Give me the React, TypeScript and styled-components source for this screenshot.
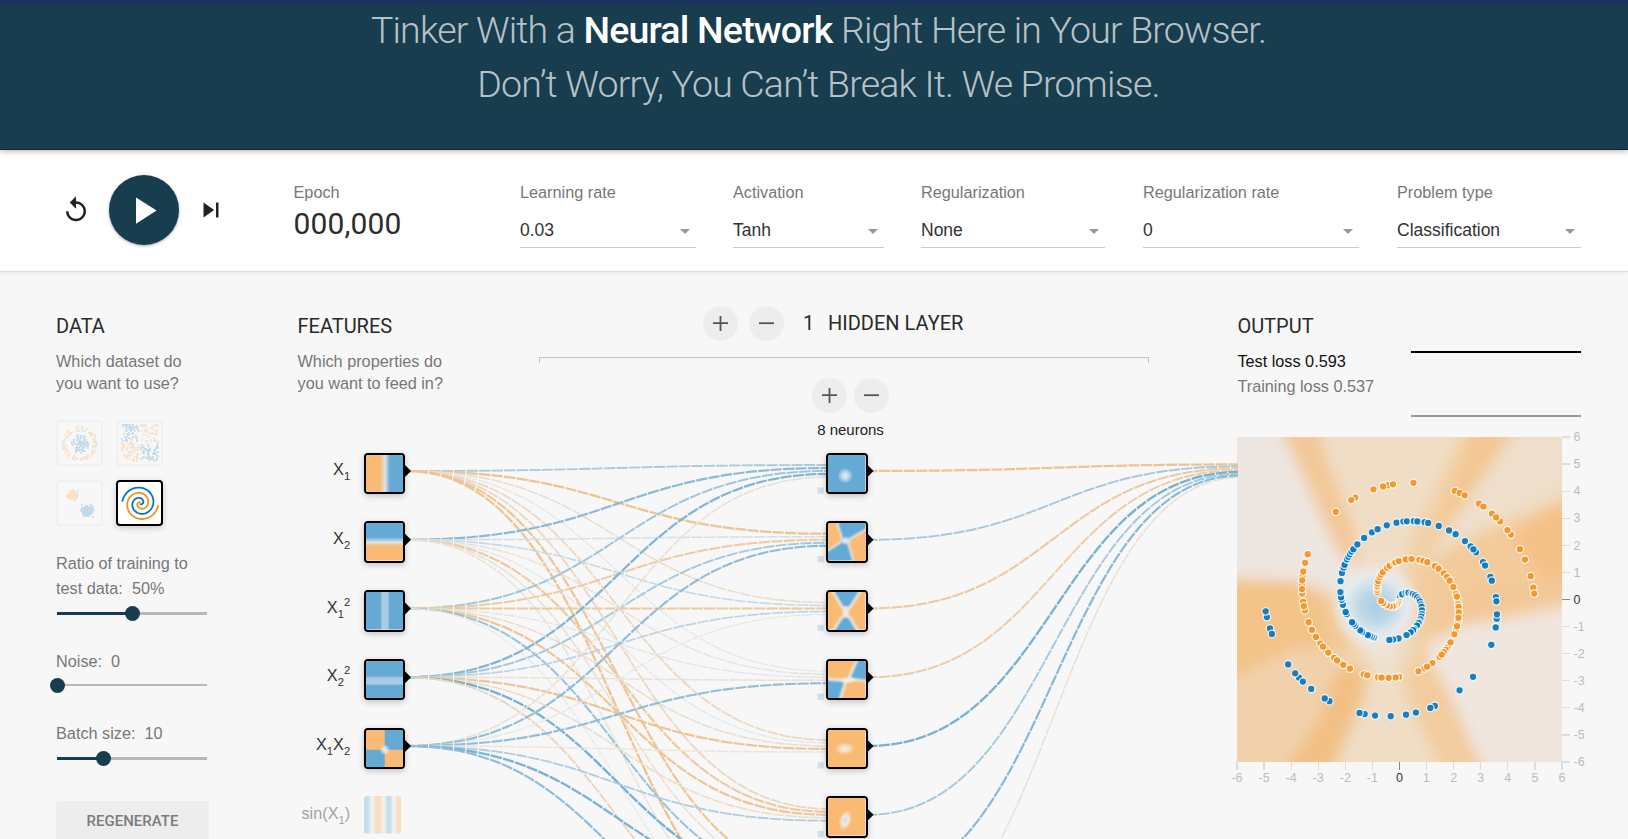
import React from "react";
import styled, { createGlobalStyle } from "styled-components";

const GlobalStyle = createGlobalStyle`
  * { box-sizing: border-box; }
  html, body { margin: 0; padding: 0; }
  body {
    height: 839px;
    overflow: hidden;
    background: #f7f7f7;
    font-family: "Liberation Sans", Arial, sans-serif;
    color: #222;
  }
`;

const ORANGE = "#f59322";
const BLUE = "#0877bd";
const SOFT_ORANGE = "#f9bb74";
const SOFT_BLUE = "#64aad5";
const PALE = "#f0f2f3";
const NAVY = "#183d4e";

/* ---------- page shell ---------- */

const Page = styled.div`
  width: 1628px;
  height: 839px;
  overflow: hidden;
  display: flex;
  flex-direction: column;
`;

const Header = styled.header`
  flex: none;
  height: 150px;
  background: ${NAVY};
  border-top: 6px solid #1a355c;
  border-bottom: 1px solid #10242e;
  padding-left: 9px;
  z-index: 2;
  box-shadow: 0 1px 6px rgba(60, 20, 20, 0.35);
`;

const Title = styled.h1`
  margin: -3px 0 0;
  font: 300 37.5px/54px Roboto, sans-serif;
  letter-spacing: -0.8px;
  text-align: center;
  color: rgba(255, 255, 255, 0.7);
  white-space: nowrap;

  b {
    font-weight: 500;
    color: #fff;
  }
`;

const Controls = styled.section`
  flex: none;
  display: flex;
  height: 122px;
  background: #fff;
  border-bottom: 1px solid #dcdcdc;
  box-shadow: 0 1px 3px rgba(0, 0, 0, 0.06);
  padding-left: 61px;
`;

const Timeline = styled.div`
  display: flex;
  align-items: center;
  width: 232.5px;
  height: 120px;

  svg {
    display: block;
    fill: #222;
  }
`;

const PlayButton = styled.div`
  display: flex;
  align-items: center;
  justify-content: center;
  width: 70px;
  height: 70px;
  margin: 0 16.5px 0 18px;
  border-radius: 50%;
  background: ${NAVY};
  box-shadow: 0 1px 3px rgba(0, 0, 0, 0.35);

  svg {
    margin-right: 1px;
    fill: #fff;
  }
`;

const Epoch = styled.div`
  width: 226.5px;
  padding-top: 31.5px;
`;

const ControlLabel = styled.div`
  font-size: 16.25px;
  line-height: 20px;
  color: #777;
  white-space: nowrap;
`;

const EpochValue = styled.div`
  margin-top: 4.5px;
  font: 400 30px/36px Roboto, sans-serif;
  letter-spacing: 0.15px;
  color: #2c2c2c;
`;

const Field = styled.div<{ $width: number; $gap: number }>`
  width: ${(p) => p.$width}px;
  margin-right: ${(p) => p.$gap}px;
  padding-top: 31.5px;
`;

const Select = styled.div`
  display: flex;
  align-items: center;
  justify-content: space-between;
  height: 35px;
  margin-top: 11.5px;
  padding-right: 6px;
  border-bottom: 1px solid #ccc;
  font-size: 17.5px;
  color: #333;

  &::after {
    content: "";
    border: 5px solid transparent;
    border-top-color: #999;
    border-bottom: 0;
    margin-top: 2px;
  }
`;

const Main = styled.main`
  display: flex;
  flex: 1;
  padding: 44px 0 0 56px;
`;

const Heading = styled.h4`
  margin: 0;
  font: 400 20px/20px Roboto, sans-serif;
  color: #2a2a2a;
  white-space: nowrap;
`;

const Hint = styled.p`
  margin: 14px 0 0;
  font-size: 16.25px;
  line-height: 22px;
  color: #777;
  white-space: nowrap;
`;

/* ---------- data column ---------- */

const DataColumn = styled.section`
  width: 241.5px;
`;

const Datasets = styled.div`
  display: grid;
  grid-template-columns: 47px 47px;
  gap: 14px 13px;
  margin-top: 26px;
`;

const Thumb = styled.div<{ $selected?: boolean }>`
  width: 47px;
  height: 46px;
  border: 2px solid ${(p) => (p.$selected ? "#000" : "#f0f0f0")};
  border-radius: 4px;
  background: ${(p) => (p.$selected ? "#fff" : "transparent")};
  box-shadow: ${(p) => (p.$selected ? "0 2px 6px rgba(0,0,0,.2)" : "none")};

  svg {
    display: block;
    opacity: ${(p) => (p.$selected ? 1 : 0.22)};
  }
`;

const SliderBlock = styled.div<{ $top: number }>`
  width: 153px;
  margin-top: ${(p) => p.$top}px;
  font-size: 16.25px;
  line-height: 25px;
  color: #777;
  white-space: pre;
`;

const Track = styled.div<{ $value: number; $thin?: boolean; $gap: number }>`
  display: flex;
  align-items: center;
  width: 150px;
  height: 15px;
  margin: ${(p) => p.$gap}px 0 0 1px;
  background: linear-gradient(
      to right,
      ${NAVY} ${(p) => p.$value}%,
      #b8b8b8 ${(p) => p.$value}%
    )
    center / 100% ${(p) => (p.$thin ? 2 : 3)}px no-repeat;

  &::before {
    content: "";
    width: 15px;
    height: 15px;
    margin-left: calc(${(p) => p.$value}% - 7.5px);
    border-radius: 50%;
    background: ${NAVY};
  }
`;

const Regenerate = styled.div`
  width: 153px;
  height: 42px;
  margin-top: 35px;
  border-radius: 3px;
  background: #ededed;
  font: 500 15px/41px Roboto, sans-serif;
  color: #7c7c7c;
  text-align: center;
`;

/* ---------- network ---------- */

const Network = styled.section`
  width: 939.5px;
`;

const NetworkHead = styled.div`
  display: flex;
  height: 122px;
`;

const FeaturesHead = styled.div`
  width: 241.5px;
`;

const LayersHead = styled.div`
  width: 610px;
  margin-top: -10.5px;
`;

const LayerRow = styled.div`
  display: flex;
  align-items: center;
  height: 35px;
  padding-left: 164px;
`;

const RoundButton = styled.div<{ $gap?: number }>`
  display: flex;
  align-items: center;
  justify-content: center;
  flex: none;
  width: 35px;
  height: 35px;
  margin-right: ${(p) => p.$gap ?? 0}px;
  border-radius: 50%;
  background: #ededed;

  svg {
    display: block;
  }
`;

const LayerTitle = styled(Heading)`
  margin-top: -1px;
`;

const LayerCount = styled(LayerTitle)`
  width: 25px;
`;

const Bracket = styled.div`
  height: 6px;
  margin-top: 16.5px;
  border: 1px solid #c4c4c4;
  border-bottom: 0;
`;

const Diagram = styled.div`
  position: relative;
  height: 400px;
`;

const Links = styled.svg`
  position: absolute;
  left: 0;
  top: 0;
`;

const NodeBox = styled.div<{ $x: number; $y: number; $off?: boolean }>`
  position: absolute;
  left: ${(p) => p.$x}px;
  top: ${(p) => p.$y}px;
  width: ${(p) => (p.$off ? 37.5 : 41.5)}px;
  height: ${(p) => (p.$off ? 37.5 : 41.5)}px;
  border: ${(p) => (p.$off ? "0" : "2px solid #000")};
  border-radius: ${(p) => (p.$off ? 3 : 4)}px;
  overflow: hidden;
  opacity: ${(p) => (p.$off ? 0.4 : 1)};
  box-shadow: ${(p) => (p.$off ? "none" : "0 2px 6px rgba(0,0,0,.22)")};

  svg {
    display: block;
  }
`;

const NodeLabel = styled.div<{ $y: number; $off?: boolean }>`
  position: absolute;
  right: 886.8px;
  top: ${(p) => p.$y}px;
  font-size: 16.25px;
  line-height: 20px;
  color: ${(p) => (p.$off ? "#a3a3a3" : "#333")};
  white-space: nowrap;

  sub,
  sup {
    position: relative;
    font-size: 11.25px;
    line-height: 0;
    vertical-align: baseline;
  }
  sub {
    top: 5px;
  }
  sup {
    top: -7px;
  }
`;

const NeuronControls = styled.div`
  position: absolute;
  left: 514.5px;
  top: -60.5px;
  width: 77px;
  display: flex;
  flex-wrap: wrap;
  justify-content: space-between;
`;

const NeuronCount = styled.div`
  width: 100%;
  margin-top: 8.5px;
  font-size: 15px;
  line-height: 18px;
  text-align: center;
  color: #222;
`;

/* ---------- output ---------- */

const OutputColumn = styled.section`
  width: 391px;
`;

const OutputTop = styled.div`
  display: flex;
  height: 111px;
`;

const Losses = styled.div`
  width: 173px;
  padding-left: 0.4px;
`;

const Loss = styled.div<{ $dark?: boolean; $top: number }>`
  margin-top: ${(p) => p.$top}px;
  font-size: 16.25px;
  line-height: 20px;
  color: ${(p) => (p.$dark ? "#111" : "#777")};
  white-space: nowrap;
`;

const Chart = styled.svg`
  display: block;
  margin-left: -6px;
`;

/* ---------- icons ---------- */

const Icon = ({ size, d }: { size: number; d: string }) => (
  <svg width={size} height={size} viewBox="0 0 24 24">
    <path d={d} />
  </svg>
);

const REPLAY =
  "M12 5V1L7 6l5 5V7c3.31 0 6 2.69 6 6s-2.69 6-6 6-6-2.69-6-6H4c0 4.42 3.58 8 8 8s8-3.58 8-8-3.58-8-8-8z";
const PLAY = "M8 5v14l11-7z";
const SKIP = "M6 18l8.5-6L6 6v12zM16 6v12h2V6h-2z";

const Plus = () => (
  <svg width="15" height="15" viewBox="0 0 15 15">
    <path d="M0 7.2h15M7.5 0v15" stroke="#555" strokeWidth="1.8" />
  </svg>
);
const Minus = () => (
  <svg width="15" height="15" viewBox="0 0 15 15">
    <path d="M0 7.2h15" stroke="#555" strokeWidth="1.8" />
  </svg>
);

/* ---------- dataset thumbnails ---------- */

function random(seed: number) {
  let s = seed;
  return () => {
    s = (s * 16807) % 2147483647;
    return s / 2147483647;
  };
}

type Dot = [number, number, string];

function circleDots(): Dot[] {
  const rnd = random(41);
  const dots: Dot[] = [];
  for (let i = 0; i < 100; i++) {
    const a = rnd() * Math.PI * 2;
    const r = rnd() * 9;
    dots.push([22 + r * Math.cos(a), 22 + r * Math.sin(a), BLUE]);
    const b = rnd() * Math.PI * 2;
    const q = 13 + rnd() * 4.5;
    dots.push([22 + q * Math.cos(b), 22 + q * Math.sin(b), ORANGE]);
  }
  return dots;
}

function xorDots(): Dot[] {
  const rnd = random(977);
  const dots: Dot[] = [];
  for (let i = 0; i < 230; i++) {
    const x = rnd() * 2 - 1;
    const y = rnd() * 2 - 1;
    const px = 22 + x * 17.5 + Math.sign(x);
    const py = 21 + y * 17.5 + Math.sign(y);
    dots.push([px, py, x * y > 0 ? BLUE : ORANGE]);
  }
  return dots;
}

function gaussDots(): Dot[] {
  const rnd = random(313);
  const g = () => rnd() + rnd() + rnd() - 1.5;
  const dots: Dot[] = [];
  for (let i = 0; i < 150; i++) {
    dots.push([14.5 + g() * 4.6, 13.5 + g() * 4.6, ORANGE]);
    dots.push([29.5 + g() * 5.6, 28.5 + g() * 5, BLUE]);
  }
  return dots;
}

const DotsThumb = ({ dots }: { dots: Dot[] }) => (
  <svg width="43" height="42">
    {dots.map(([x, y, c], i) => (
      <rect key={i} x={Math.round(x) - 1} y={Math.round(y) - 1} width="1.7" height="1.7" fill={c} />
    ))}
  </svg>
);

function spiral(i: number, sign: number): [number, number] {
  const r = i / 50;
  const t = (1.75 * i * 2 * Math.PI) / 250;
  return [sign * r * Math.sin(t), -sign * r * Math.cos(t)];
}

// The thumbnail's y axis points down, so the spiral is mirrored there.
function spiralPath(sign: number, scale: number) {
  const pts: string[] = [];
  for (let i = 2; i < 250; i += 3) {
    const [x, y] = spiral(i, sign);
    pts.push(`${(22.3 + x * scale).toFixed(2)} ${(21.3 - y * scale).toFixed(2)}`);
  }
  return "M" + pts.join("L");
}

const SpiralThumb = () => (
  <svg width="43" height="42" fill="none" strokeWidth="1.8">
    <path d={spiralPath(1, 3.65)} stroke={BLUE} />
    <path d={spiralPath(-1, 3.65)} stroke={ORANGE} />
  </svg>
);

/* ---------- node heat maps ---------- */

const NodeArt = ({ base, children }: { base: string; children?: React.ReactNode }) => (
  <svg width="37.5" height="37.5" viewBox="0 0 38 38">
    <rect width="38" height="38" fill={base} />
    {children}
  </svg>
);

const FEATURES: { label: React.ReactNode; art: React.ReactNode; off?: boolean }[] = [
  {
    label: <>X<sub>1</sub></>,
    art: <NodeArt base="url(#fx)" />,
  },
  {
    label: <>X<sub>2</sub></>,
    art: <NodeArt base="url(#fy)" />,
  },
  {
    label: <>X<sub>1</sub><sup>2</sup></>,
    art: <NodeArt base="url(#fxx)" />,
  },
  {
    label: <>X<sub>2</sub><sup>2</sup></>,
    art: <NodeArt base="url(#fyy)" />,
  },
  {
    label: <>X<sub>1</sub>X<sub>2</sub></>,
    art: (
      <NodeArt base={SOFT_BLUE}>
        <g filter="url(#soft1)">
          <path d="M-5 -5H19V20H-5zM19 20H43V43H19z" fill={SOFT_ORANGE} />
        </g>
        <circle cx="19" cy="20" r="5.5" fill="url(#glow)" />
      </NodeArt>
    ),
  },
  {
    label: <>sin(X<sub>1</sub>)</>,
    art: <NodeArt base="url(#fsin)" />,
    off: true,
  },
];

const NEURONS: React.ReactNode[] = [
  <NodeArt base={SOFT_BLUE}>
    <circle cx="17.5" cy="21" r="8" fill="url(#glow)" />
  </NodeArt>,
  <NodeArt base={SOFT_BLUE}>
    <g filter="url(#soft)" fill={SOFT_ORANGE} stroke={PALE} strokeWidth="1.6">
      <path d="M-5 -5H8L12 8L15 18L8 23L-5 31z" />
      <path d="M43 4L22 16L20.5 21L27 43H43z" />
    </g>
    <circle cx="18" cy="18" r="5" fill="url(#glow)" />
  </NodeArt>,
  <NodeArt base={SOFT_ORANGE}>
    <g filter="url(#soft)" fill={SOFT_BLUE} stroke={PALE} strokeWidth="2.2">
      <path d="M3 -5L7 3L15 16H22L31 2L35 -5z" />
      <path d="M3 43L13 27L18 23L23 27L32 43z" />
    </g>
    <ellipse cx="18" cy="20.5" rx="5" ry="7" fill="url(#glow)" />
  </NodeArt>,
  <NodeArt base={SOFT_ORANGE}>
    <g filter="url(#soft)" fill={SOFT_BLUE} stroke={PALE} strokeWidth="2.2">
      <path d="M31 -5H43V21L21 18z" />
      <path d="M-5 18L18 20L11 43H-5z" />
    </g>
    <ellipse cx="20" cy="19.5" rx="9" ry="4" fill="url(#glow)" />
  </NodeArt>,
  <NodeArt base={SOFT_ORANGE}>
    <ellipse cx="17" cy="19" rx="10" ry="6.5" fill="url(#glow)" />
  </NodeArt>,
  <NodeArt base={SOFT_ORANGE}>
    <ellipse cx="17.5" cy="22.5" rx="6.5" ry="10.5" fill="url(#glowBlue)" transform="rotate(18 17.5 22.5)" />
  </NodeArt>,
];

const SharedDefs = () => (
  <defs>
    <linearGradient id="fx">
      <stop offset=".37" stopColor={SOFT_ORANGE} />
      <stop offset=".51" stopColor="#dfe3e4" />
      <stop offset=".64" stopColor={SOFT_BLUE} />
    </linearGradient>
    <linearGradient id="fy" x2="0" y2="1">
      <stop offset=".38" stopColor={SOFT_BLUE} />
      <stop offset=".51" stopColor="#dfe3e4" />
      <stop offset=".62" stopColor={SOFT_ORANGE} />
    </linearGradient>
    <linearGradient id="fxx">
      <stop offset=".38" stopColor={SOFT_BLUE} />
      <stop offset=".43" stopColor="#a9cce4" />
      <stop offset=".58" stopColor="#a9cce4" />
      <stop offset=".63" stopColor={SOFT_BLUE} />
    </linearGradient>
    <linearGradient id="fyy" x2="0" y2="1">
      <stop offset=".4" stopColor={SOFT_BLUE} />
      <stop offset=".45" stopColor="#a9cce4" />
      <stop offset=".6" stopColor="#a9cce4" />
      <stop offset=".66" stopColor={SOFT_BLUE} />
    </linearGradient>
    <linearGradient id="fsin">
      <stop offset=".1" stopColor="#7ab9de" />
      <stop offset=".22" stopColor={PALE} />
      <stop offset=".32" stopColor={SOFT_ORANGE} />
      <stop offset=".42" stopColor={SOFT_ORANGE} />
      <stop offset=".53" stopColor={PALE} />
      <stop offset=".62" stopColor="#7ab9de" />
      <stop offset=".7" stopColor="#7ab9de" />
      <stop offset=".79" stopColor={PALE} />
      <stop offset=".9" stopColor={SOFT_ORANGE} />
    </linearGradient>
    <radialGradient id="glow">
      <stop offset="0" stopColor={PALE} stopOpacity=".95" />
      <stop offset=".4" stopColor={PALE} stopOpacity=".7" />
      <stop offset="1" stopColor={PALE} stopOpacity="0" />
    </radialGradient>
    <radialGradient id="glowBlue">
      <stop offset="0" stopColor="#c5dcea" />
      <stop offset=".45" stopColor={PALE} stopOpacity=".85" />
      <stop offset="1" stopColor={PALE} stopOpacity="0" />
    </radialGradient>
    <filter id="soft" x="-20%" y="-20%" width="140%" height="140%">
      <feGaussianBlur stdDeviation="0.9" />
    </filter>
    <filter id="soft1" x="-20%" y="-20%" width="140%" height="140%">
      <feGaussianBlur stdDeviation="0.7" />
    </filter>
  </defs>
);

/* ---------- links ---------- */

// WEIGHTS[input][neuron]
const WEIGHTS = [
  [0.28, -0.45, -0.15, 0.03, -0.22, -0.22, -0.42, -0.45],
  [0.42, 0.1, 0.15, -0.1, 0.03, -0.38, -0.13, -0.1],
  [0.32, -0.35, -0.38, 0.04, -0.15, -0.42, 0.35, 0.01],
  [0.45, 0.3, 0.2, -0.12, -0.42, -0.15, 0.5, -0.25],
  [-0.13, 0.4, 0.02, 0.38, -0.08, 0.25, 0.48, 0.4],
];
const OUT_WEIGHTS = [-0.45, 0.3, -0.38, -0.33, 0.5, 0.3, 0.43, -0.13];

function weightColor(w: number) {
  const zero = [232, 234, 235];
  const end = w < 0 ? [245, 147, 34] : [8, 119, 189];
  const k = Math.min(1, Math.abs(w));
  return `rgb(${zero.map((z, i) => Math.round(z + (end[i] - z) * k)).join(",")})`;
}

const STEP = 68.75;
const rowY = (i: number) => 33 + i * STEP;

const Link = ({ x0, y0, x1, y1, w }: { x0: number; y0: number; x1: number; y1: number; w: number }) => {
  const m = (x0 + x1) / 2;
  return (
    <path
      d={`M${x0} ${y0}C${m} ${y0} ${m} ${y1} ${x1} ${y1}`}
      stroke={weightColor(w)}
      strokeWidth={1.25 * (1 + 1.8 * Math.abs(w))}
      strokeDasharray="11.25 1.25"
      strokeDashoffset="2"
    />
  );
};

const NetworkLinks = () => (
  <Links width="940" height="401" fill="none">
    <SharedDefs />
    {WEIGHTS.map((row, i) =>
      row.map((w, j) => (
        <Link key={`${i}-${j}`} x0={108.1} y0={rowY(i)} x1={530.1} y1={rowY(j) + (i - 2) * 3} w={w} />
      ))
    )}
    {OUT_WEIGHTS.map((w, j) => (
      <Link key={j} x0={570.15} y0={rowY(j)} x1={942} y1={rowY(0) + (j - 3.5) * 1.875} w={w} />
    ))}
    {[0, 1, 2, 3, 4, 5].map((i) => (
      <g key={i}>
        <path d={`M107 ${rowY(i) - 6}l6 6l-6 6z`} fill={i < 5 ? "#000" : "none"} />
        <path d={`M569.5 ${rowY(i) - 6}l6 6l-6 6z`} fill="#000" />
        <rect x="519.5" y={rowY(i) + 16.3} width="6.25" height="6.25" fill="#d2dfe7" />
      </g>
    ))}
  </Links>
);

/* ---------- output chart ---------- */

const BLUE_POINTS = [
  5, 10, 11, 17, 20, 21, 25, 27, 30, 33, 36, 38, 41, 43, 46, 49, 51, 53, 55, 56, 58, 61, 62, 64, 67,
  72, 75, 77, 85, 86, 87, 88, 91, 92, 95, 96, 97, 101, 102, 105, 107, 108, 110, 114, 117, 119, 120,
  122, 123, 124, 125, 126, 128, 131, 134, 136, 139, 142, 144, 145, 147, 148, 150, 151, 154, 157, 159,
  162, 164, 166, 165, 169, 170, 173, 174, 178, 179, 183, 182, 185, 189, 197, 201, 207, 208, 211, 213,
  216, 219, 221, 222, 228, 229, 232, 235, 234, 236, 238, 245, 244, 247, 248,
];
const ORANGE_POINTS = [
  5, 8, 11, 14, 16, 18, 22, 26, 30, 31, 34, 43, 45, 47, 48, 50, 52, 55, 57, 59, 63, 65, 68, 69, 71,
  75, 78, 82, 84, 86, 90, 92, 95, 98, 97, 99, 102, 105, 107, 106, 109, 111, 110, 112, 115, 114, 118,
  117, 120, 124, 125, 126, 123, 127, 129, 128, 132, 135, 134, 137, 143, 144, 146, 149, 148, 153, 152,
  157, 160, 159, 162, 161, 165, 164, 167, 166, 169, 171, 173, 176, 178, 177, 180, 182, 181, 184, 183,
  185, 187, 189, 200, 205, 204, 209, 212, 211, 213, 217, 225, 226, 227, 230, 231, 233, 235, 234, 238,
  237, 241, 243, 246, 248, 249,
];
const UNIT = 325 / 12;

const DataPoints = ({ list, sign, color }: { list: number[]; sign: number; color: string }) => (
  <g fill={color} stroke="#fff" strokeWidth="1.25" strokeOpacity=".85" fillOpacity=".93">
    {list.map((i) => {
      const [x, y] = spiral(i, sign);
      return <circle key={i} cx={162.5 + x * UNIT} cy={162.5 + y * UNIT} r="3.75" />;
    })}
  </g>
);

const TICKS = [-6, -5, -4, -3, -2, -1, 0, 1, 2, 3, 4, 5, 6];

const OutputChart = () => (
  <Chart width="385" height="380" viewBox="-6 -10 385 380">
    <defs>
      <clipPath id="plot">
        <rect width="325" height="325" />
      </clipPath>
      <filter id="haze" x="-30%" y="-30%" width="160%" height="160%">
        <feGaussianBlur stdDeviation="7" />
      </filter>
      <filter id="haze2" x="-40%" y="-40%" width="180%" height="180%">
        <feGaussianBlur stdDeviation="12" />
      </filter>
      <radialGradient id="core">
        <stop offset="0" stopColor="#accee3" />
        <stop offset=".35" stopColor="#bdd7e6" />
        <stop offset=".7" stopColor="#e3ebef" stopOpacity=".85" />
        <stop offset="1" stopColor="#ecebe9" stopOpacity="0" />
      </radialGradient>
    </defs>
    <g clipPath="url(#plot)">
      <rect width="325" height="325" fill="#efddc5" />
      <g filter="url(#haze)">
        <path d="M240 -30H300L225 95L205 190L185 215L165 150L175 100z" fill="#f2d0a6" />
        <path d="M345 55L240 98L190 130L165 150L172 215L215 195L345 160z" fill="#f3ca9a" />
        <path d="M345 55L275 98L310 150H345z" fill="#f4c187" />
        <path d="M210 152L345 140V164L270 170L205 192z" fill="#f3c898" />
        <path d="M243 -30H298L212 100L200 92z" fill="#f4c793" />
        <path d="M294 -30H355V25L235 93L190 125L205 100z" fill="#eedfcc" />
        <path d="M-30 -30H35L62 40L88 95L118 138L100 152L60 144L-30 140z" fill="#ede6e1" />
        <path d="M33 -30H74L90 25L116 90L122 126L104 122L78 60z" fill="#f3c797" />
        <path d="M-30 141L60 144L102 165L128 225L60 226L-30 268z" fill="#f3c388" />
        <path d="M-30 255L60 210L125 215L100 260L50 355H-30z" fill="#f1d2ac" />
        <path d="M355 172L225 188L190 208L215 270L262 355H355z" fill="#efe6e0" />
        <path d="M150 200L180 205L210 250L256 355H217L175 270z" fill="#f2cc9e" />
        <path d="M100 232L130 230L126 260L86 355H32L80 285z" fill="#f2c084" />
      </g>
      <g filter="url(#haze2)" opacity=".85">
        <ellipse cx="138" cy="172" rx="38" ry="42" fill="#eeebe8" />
        <ellipse cx="158" cy="210" rx="16" ry="26" fill="#eee7e0" />
      </g>
      <ellipse cx="139" cy="169" rx="45" ry="43" fill="url(#core)" />
      <DataPoints list={BLUE_POINTS} sign={1} color={BLUE} />
      <DataPoints list={ORANGE_POINTS} sign={-1} color={ORANGE} />
    </g>
    <g fontFamily='"Liberation Sans", Arial, sans-serif' fontSize="12.5" shapeRendering="crispEdges">
      {TICKS.map((t) => {
        const color = t === 0 ? "#333" : "#bbb";
        const line = t === 0 ? "#888" : "#ddd";
        const x = 162.5 + t * UNIT;
        const y = 162.5 - t * UNIT;
        return (
          <g key={t}>
            <path d={`M${x} 325v8M325 ${y}h8`} stroke={line} strokeWidth="1.25" />
            <text x={x} y="344.7" textAnchor="middle" fill={color}>{t}</text>
            <text x="336.5" y={y + 4.2} fill={color}>{t}</text>
          </g>
        );
      })}
    </g>
  </Chart>
);

/* ---------- page ---------- */

const FIELDS = [
  { label: "Learning rate", value: "0.03", width: 176, gap: 37 },
  { label: "Activation", value: "Tanh", width: 151, gap: 37 },
  { label: "Regularization", value: "None", width: 184, gap: 38 },
  { label: "Regularization rate", value: "0", width: 216, gap: 38 },
  { label: "Problem type", value: "Classification", width: 184, gap: 0 },
];

export default function App() {
  return (
    <Page>
      <GlobalStyle />
      <Header>
        <Title>
          Tinker With a <b>Neural Network</b> Right Here in Your Browser.
          <br />
          Don’t Worry, You Can’t Break It. We Promise.
        </Title>
      </Header>
      <Controls>
        <Timeline>
          <Icon size={30} d={REPLAY} />
          <PlayButton>
            <Icon size={45} d={PLAY} />
          </PlayButton>
          <Icon size={30} d={SKIP} />
        </Timeline>
        <Epoch>
          <ControlLabel>Epoch</ControlLabel>
          <EpochValue>000,000</EpochValue>
        </Epoch>
        {FIELDS.map((f) => (
          <Field key={f.label} $width={f.width} $gap={f.gap}>
            <ControlLabel>{f.label}</ControlLabel>
            <Select>{f.value}</Select>
          </Field>
        ))}
      </Controls>
      <Main>
        <DataColumn>
          <Heading>DATA</Heading>
          <Hint>
            Which dataset do
            <br />
            you want to use?
          </Hint>
          <Datasets>
            <Thumb>
              <DotsThumb dots={circleDots()} />
            </Thumb>
            <Thumb>
              <DotsThumb dots={xorDots()} />
            </Thumb>
            <Thumb>
              <DotsThumb dots={gaussDots()} />
            </Thumb>
            <Thumb $selected>
              <SpiralThumb />
            </Thumb>
          </Datasets>
          <SliderBlock $top={25}>
            {"Ratio of training to\ntest data:  50%"}
            <Track $value={50} $gap={4.5} />
          </SliderBlock>
          <SliderBlock $top={28.5}>
            {"Noise:  0"}
            <Track $value={0} $thin $gap={3.5} />
          </SliderBlock>
          <SliderBlock $top={28.5}>
            {"Batch size:  10"}
            <Track $value={31} $gap={4.5} />
          </SliderBlock>
          <Regenerate>REGENERATE</Regenerate>
        </DataColumn>
        <Network>
          <NetworkHead>
            <FeaturesHead>
              <Heading>FEATURES</Heading>
              <Hint>
                Which properties do
                <br />
                you want to feed in?
              </Hint>
            </FeaturesHead>
            <LayersHead>
              <LayerRow>
                <RoundButton $gap={11}>
                  <Plus />
                </RoundButton>
                <RoundButton $gap={19}>
                  <Minus />
                </RoundButton>
                <LayerCount>1</LayerCount>
                <LayerTitle>HIDDEN LAYER</LayerTitle>
              </LayerRow>
              <Bracket />
            </LayersHead>
          </NetworkHead>
          <Diagram>
            <NetworkLinks />
            <NeuronControls>
              <RoundButton>
                <Plus />
              </RoundButton>
              <RoundButton>
                <Minus />
              </RoundButton>
              <NeuronCount>8 neurons</NeuronCount>
            </NeuronControls>
            {FEATURES.map((f, i) => (
              <React.Fragment key={i}>
                <NodeLabel $y={21.2 + i * STEP} $off={f.off}>
                  {f.label}
                </NodeLabel>
                <NodeBox $x={66.4} $y={14.6 + i * STEP} $off={f.off}>
                  {f.art}
                </NodeBox>
              </React.Fragment>
            ))}
            {NEURONS.map((art, i) => (
              <NodeBox key={i} $x={528.8} $y={14.6 + i * STEP}>
                {art}
              </NodeBox>
            ))}
          </Diagram>
        </Network>
        <OutputColumn>
          <OutputTop>
            <Losses>
              <Heading>OUTPUT</Heading>
              <Loss $dark $top={15}>Test loss 0.593</Loss>
              <Loss $top={5}>Training loss 0.537</Loss>
            </Losses>
            <svg width="172" height="111">
              <path d="M1 36h170" stroke="#000" strokeWidth="2" />
              <path d="M1 100h170" stroke="#999" strokeWidth="2" />
            </svg>
          </OutputTop>
          <OutputChart />
        </OutputColumn>
      </Main>
    </Page>
  );
}
